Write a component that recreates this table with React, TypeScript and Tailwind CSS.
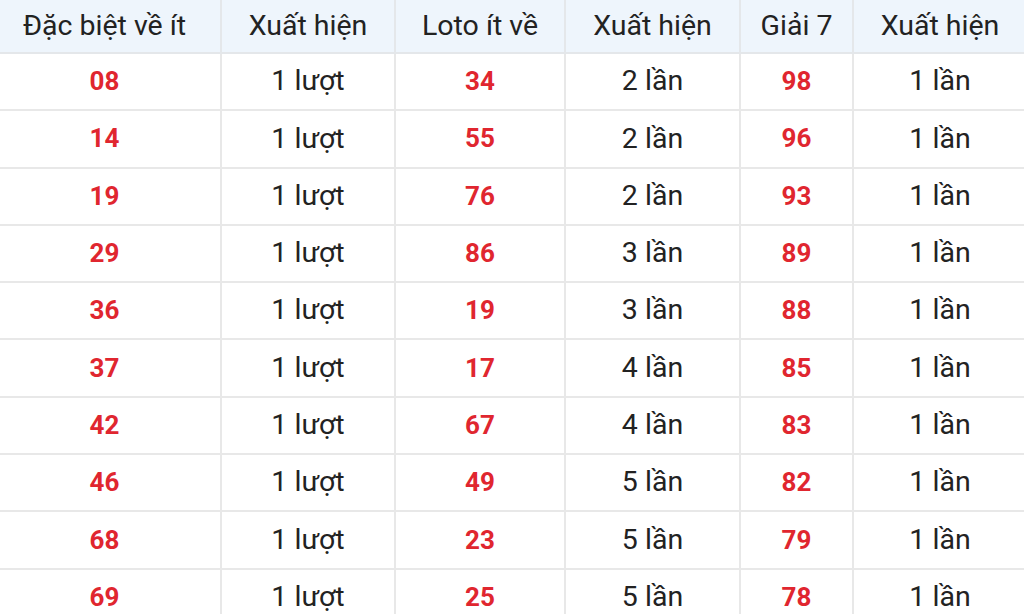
import React from 'react';

const rows: [string, string, string, string, string, string][] = [
  ['08', '1 lượt', '34', '2 lần', '98', '1 lần'],
  ['14', '1 lượt', '55', '2 lần', '96', '1 lần'],
  ['19', '1 lượt', '76', '2 lần', '93', '1 lần'],
  ['29', '1 lượt', '86', '3 lần', '89', '1 lần'],
  ['36', '1 lượt', '19', '3 lần', '88', '1 lần'],
  ['37', '1 lượt', '17', '4 lần', '85', '1 lần'],
  ['42', '1 lượt', '67', '4 lần', '83', '1 lần'],
  ['46', '1 lượt', '49', '5 lần', '82', '1 lần'],
  ['68', '1 lượt', '23', '5 lần', '79', '1 lần'],
  ['69', '1 lượt', '25', '5 lần', '78', '1 lần'],
];

const headers = ['Đặc biệt về ít', 'Xuất hiện', 'Loto ít về', 'Xuất hiện', 'Giải 7', 'Xuất hiện'];

const App: React.FC = () => {
  return (
    <div className="w-[1024px] h-[614px] overflow-hidden bg-white" style={{ fontFamily: 'Roboto, "Noto Sans", sans-serif' }}>
      <div className="grid grid-cols-[222px_174px_170px_175px_113px_174px] text-[28.5px] text-[#222]">
        {headers.map((h, i) => (
          <div
            key={i}
            className={
              'h-[54px] flex items-center justify-center bg-[#eef5fc] border-r-2 border-b-2 border-[#e4e7ea] ' +
              (i === 0 ? 'pr-[11px]' : '')
            }
          >
            {h}
          </div>
        ))}
        {rows.map((r, ri) =>
          r.map((c, ci) => (
            <div
              key={ri + '-' + ci}
              className={
                'h-[57.3px] flex items-center justify-center border-r-2 border-b-2 border-[#e8e8e8] ' +
                (ci % 2 === 0 ? 'font-bold text-[26px] text-[#e0262f] ' : '') +
                (ci === 0 ? 'pr-[11px]' : '')
              }
            >
              {c}
            </div>
          ))
        )}
      </div>
    </div>
  );
};

export default App;
